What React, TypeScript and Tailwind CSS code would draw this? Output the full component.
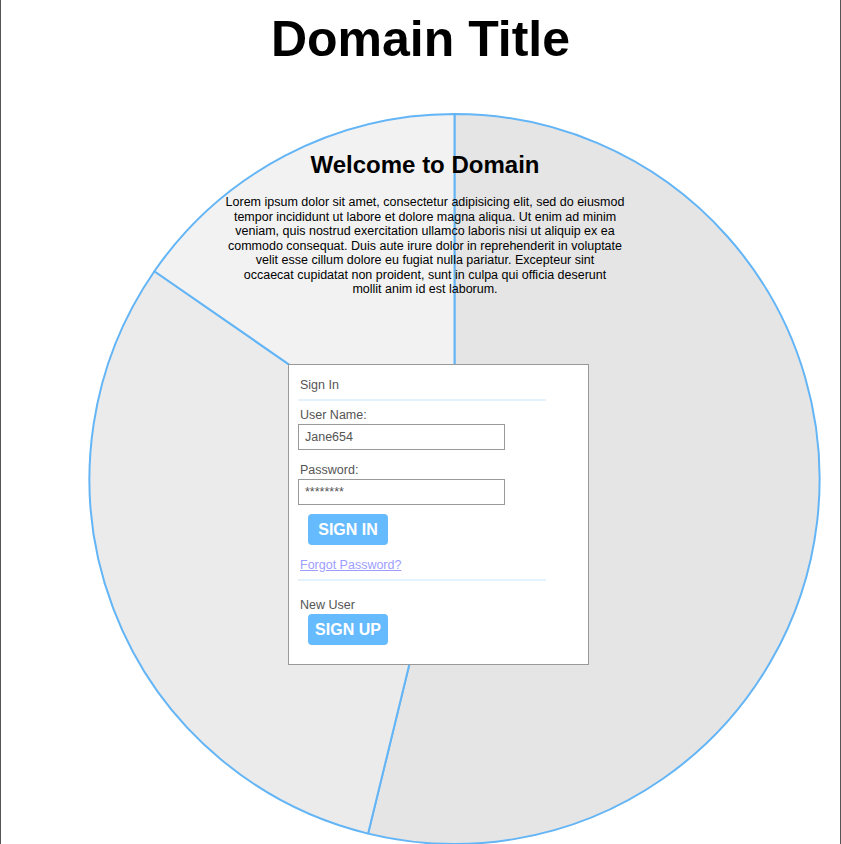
import React from "react";

const cx = 453.5;
const cy = 479;
const r = 365;
const top = { x: cx, y: cy - r };
const bottom = { x: 367.1, y: 833.6 };
const upperLeft = { x: 153.4, y: 271.2 };

function Pie() {
  return (
    <svg
      className="absolute left-0 top-0"
      width={841}
      height={860}
      viewBox="0 0 841 860"
    >
      <path
        d={`M ${cx} ${cy} L ${top.x} ${top.y} A ${r} ${r} 0 1 1 ${bottom.x} ${bottom.y} Z`}
        fill="#e5e5e5"
        stroke="#64b5f6"
        strokeWidth={2}
        strokeLinejoin="round"
      />
      <path
        d={`M ${cx} ${cy} L ${bottom.x} ${bottom.y} A ${r} ${r} 0 0 1 ${upperLeft.x} ${upperLeft.y} Z`}
        fill="#ebebeb"
        stroke="#64b5f6"
        strokeWidth={2}
        strokeLinejoin="round"
      />
      <path
        d={`M ${cx} ${cy} L ${upperLeft.x} ${upperLeft.y} A ${r} ${r} 0 0 1 ${top.x} ${top.y} Z`}
        fill="#f2f2f2"
        stroke="#64b5f6"
        strokeWidth={2}
        strokeLinejoin="round"
      />
    </svg>
  );
}

export default function App() {
  return (
    <div className="relative w-[841px] h-[844px] overflow-hidden bg-white border-l border-r border-[#555555] font-['Liberation_Sans',Arial,sans-serif]">
      <Pie />
      <div className="relative flex flex-col">
        <h1 className="mt-[10px] text-center text-[50px] leading-[58px] font-bold text-black">
          Domain Title
        </h1>
        <div className="mt-[83px] ml-[214px] w-[420px] text-center text-black">
          <h2 className="text-[24px] leading-[28px] font-bold">Welcome to Domain</h2>
          <p className="mt-[16px] text-[12.5px] leading-[14.5px] whitespace-nowrap">
            Lorem ipsum dolor sit amet, consectetur adipisicing elit, sed do eiusmod
            <br />
            tempor incididunt ut labore et dolore magna aliqua. Ut enim ad minim
            <br />
            veniam, quis nostrud exercitation ullamco laboris nisi ut aliquip ex ea
            <br />
            commodo consequat. Duis aute irure dolor in reprehenderit in voluptate
            <br />
            velit esse cillum dolore eu fugiat nulla pariatur. Excepteur sint
            <br />
            occaecat cupidatat non proident, sunt in culpa qui officia deserunt
            <br />
            mollit anim id est laborum.
          </p>
        </div>
        <div className="mt-[67px] ml-[287px] w-[301px] h-[301px] border border-[#999999] bg-white pl-[9px] pt-[13px] flex flex-col items-start text-[12.5px] leading-[14px] text-[#555555]">
          <div className="pl-[2px]">Sign In</div>
          <div className="mt-[7px] w-[248px] h-[2px] bg-[#e3f2fd]" />
          <div className="mt-[7px] pl-[2px]">User Name:</div>
          <div className="mt-[2px] w-[207px] h-[26px] border border-[#999999] flex items-center pl-[6px] text-[12.5px] text-[#555555]">
            Jane654
          </div>
          <div className="mt-[13px] pl-[2px]">Password:</div>
          <div className="mt-[2px] w-[207px] h-[26px] border border-[#999999] flex items-center pl-[6px] text-[12.5px] text-[#555555]">
            ********
          </div>
          <button className="mt-[9px] ml-[10px] w-[80px] h-[31px] rounded-[4px] bg-[#66bbff] text-white text-[16px] font-bold leading-[31px] text-center">
            SIGN IN
          </button>
          <a className="mt-[13px] pl-[2px] text-[#9d9dff] underline cursor-pointer">
            Forgot Password?
          </a>
          <div className="mt-[7px] w-[248px] h-[2px] bg-[#e3f2fd]" />
          <div className="mt-[17px] pl-[2px]">New User</div>
          <button className="mt-[2px] ml-[10px] w-[80px] h-[31px] rounded-[4px] bg-[#66bbff] text-white text-[16px] font-bold leading-[31px] text-center">
            SIGN UP
          </button>
        </div>
      </div>
    </div>
  );
}
